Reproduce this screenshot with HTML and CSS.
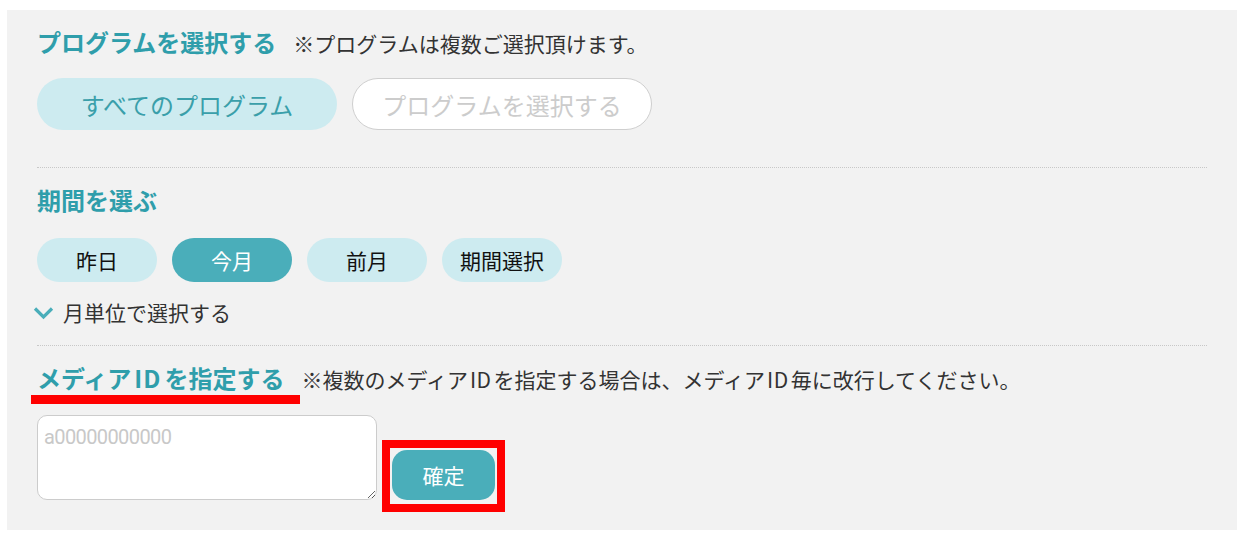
FILE: index.html
```html
<!DOCTYPE html>
<html lang="ja">
<head>
<meta charset="utf-8">
<title>検索条件</title>
<link rel="stylesheet" href="styles.css">
</head>
<body>
<div class="panel">
  <section class="sec sec-program">
    <div class="head">
      <h2 class="title">プログラムを選択する</h2>
      <span class="note">※プログラムは複数ご選択頂けます。</span>
    </div>
    <div class="big-pills">
      <button class="big-pill big-on">すべてのプログラム</button>
      <button class="big-pill big-off">プログラムを選択する</button>
    </div>
  </section>
  <section class="sec sec-period">
    <div class="head">
      <h2 class="title">期間を選ぶ</h2>
    </div>
    <div class="pills">
      <button class="pill">昨日</button>
      <button class="pill pill-on">今月</button>
      <button class="pill">前月</button>
      <button class="pill">期間選択</button>
    </div>
    <div class="monthly">
      <svg class="chev" width="21" height="14" viewBox="0 0 21 14"><polyline points="2,2.5 10.5,11 19,2.5" fill="none" stroke="#4aaeba" stroke-width="3.2"/></svg>
      <span>月単位で選択する</span>
    </div>
  </section>
  <section class="sec sec-media">
    <div class="head">
      <h2 class="title title-marked">メディア<span class="id">ID</span>を指定する</h2>
      <span class="note">※複数のメディア<span class="id">ID</span>を指定する場合は、メディア<span class="id">ID</span>毎に改行してください。</span>
    </div>
    <div class="media-row">
      <textarea class="ids" placeholder="a00000000000"></textarea>
      <div class="submit-wrap"><button class="submit">確定</button></div>
    </div>
  </section>
</div>
</body>
</html>
```
FILE: styles.css
```css
* { box-sizing: border-box; }
html, body { margin: 0; padding: 0; background: #fff; }
body {
  font-family: "Noto Sans CJK JP", "Liberation Sans", sans-serif;
  color: #333;
}
.panel {
  margin: 10px 8px 11px 7px;
  width: 1230px;
  background: #f2f2f2;
  padding: 0 30px 30px;
}
.sec { border-bottom: 1px dotted #c8c8c8; }
.sec-media { border-bottom: none; }
.head {
  display: flex;
  align-items: baseline;
  height: 32px;
}
.title {
  margin: 0;
  font-size: 24px;
  line-height: 32px;
  font-weight: bold;
  color: #2f9eab;
}
.note {
  margin-left: 17px;
  font-size: 21px;
  line-height: 32px;
  color: #333;
}
.id { letter-spacing: 0.5px; margin: 0 2px; }
.title .id { letter-spacing: 1px; margin: 0 3px; }
.sec-program { padding: 16px 0 37px; }
.big-pills { display: flex; gap: 15px; margin-top: 20px; }
.big-pill {
  width: 300px;
  height: 52px;
  border-radius: 26px;
  font-family: inherit;
  font-size: 24px;
  border: 1px solid transparent;
  padding: 0;
}
.big-on { background: #cdebf0; color: #3a9faa; }
.big-off { background: #fff; border-color: #cfcfcf; color: #cccccc; }
.sec-period { padding: 16px 0 19px; }
.pills { display: flex; gap: 15px; margin-top: 22px; }
.pill {
  width: 120px;
  height: 44px;
  border-radius: 22px;
  border: none;
  background: #cdebf0;
  color: #111;
  font-family: inherit;
  font-size: 21px;
  padding: 0;
}
.pill-on { background: #4aaeba; color: #fff; }
.monthly {
  display: flex;
  align-items: center;
  margin-top: 16px;
  margin-left: -4px;
  height: 28px;
  font-size: 21px;
  color: #333;
}
.chev { margin-right: 9px; margin-top: 1px; }
.sec-media { padding-top: 16px; }
.title-marked { position: relative; }
.title-marked::after {
  content: "";
  position: absolute;
  left: -6px;
  top: 33px;
  width: 269px;
  height: 9px;
  background: #ff0000;
}
.media-row {
  display: flex;
  align-items: flex-end;
  margin-top: 21px;
}
.ids {
  width: 340px;
  height: 85px;
  border: 1px solid #cccccc;
  border-radius: 10px;
  background: #fff;
  padding: 7px 6px;
  font-family: "Roboto", "Liberation Sans", sans-serif;
  font-size: 20px;
  letter-spacing: -0.6px;
  line-height: 28px;
  margin: 0;
  resize: both;
}
.ids::placeholder { color: #c8c8c8; }
.submit-wrap { position: relative; margin-left: 15px; }
.submit-wrap::after {
  content: "";
  position: absolute;
  left: -10px;
  top: -10px;
  right: -10px;
  bottom: -12px;
  border: 8px solid #ff0000;
  pointer-events: none;
}
.submit {
  display: block;
  width: 103px;
  height: 50px;
  border: none;
  border-radius: 15px;
  background: #4aaeba;
  color: #fff;
  font-family: inherit;
  font-size: 21px;
  padding: 0;
}
```
